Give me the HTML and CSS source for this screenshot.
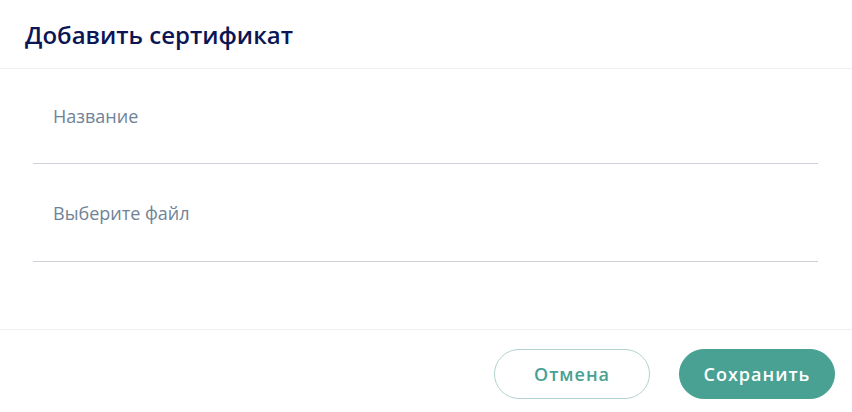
FILE: index.html
```html
<!DOCTYPE html>
<html lang="ru">
<head>
<meta charset="utf-8">
<link rel="stylesheet" href="styles.css">
</head>
<body>
<div class="modal">
  <header class="modal-header">
    <h1 class="modal-title">Добавить сертификат</h1>
  </header>
  <main class="modal-body">
    <div class="field field-name"><span class="field-label">Название</span></div>
    <div class="field field-file"><span class="field-label">Выберите файл</span></div>
  </main>
  <footer class="modal-footer">
    <button class="btn btn-outline">Отмена</button>
    <button class="btn btn-primary">Сохранить</button>
  </footer>
</div>
</body>
</html>
```
FILE: styles.css
```css
html, body {
  margin: 0;
  padding: 0;
  background: #ffffff;
}
body {
  font-family: "Open Sans", "Noto Sans", sans-serif;
  width: 852px;
  height: 412px;
  overflow: hidden;
}
.modal {
  display: flex;
  flex-direction: column;
}
.modal-header {
  height: 68px;
  border-bottom: 1px solid #eef0f3;
  padding: 0 25px;
  display: flex;
  align-items: center;
}
.modal-title {
  margin: 0;
  font-size: 24px;
  font-weight: 600;
  color: #0c1654;
  letter-spacing: 0;
}
.modal-body {
  height: 260px;
  padding: 0 34px 0 33px;
  display: flex;
  flex-direction: column;
}
.field {
  border-bottom: 1px solid #cdd2d8;
  padding: 0 20px;
  display: flex;
  align-items: center;
  flex-shrink: 0;
}
.field-name {
  height: 94px;
}
.field-file {
  height: 97px;
}
.field-label {
  font-size: 18px;
  color: #6f8397;
}
.modal-footer {
  border-top: 1px solid #eef0f3;
  padding: 19px 17px 0 0;
  display: flex;
  justify-content: flex-end;
  gap: 29px;
}
.btn {
  height: 50px;
  width: 156px;
  border-radius: 25px;
  font-family: "Open Sans", "Noto Sans", sans-serif;
  font-size: 18px;
  font-weight: 600;
  letter-spacing: 1px;
  cursor: pointer;
}
.btn-outline {
  background: #ffffff;
  border: 1px solid #b3d3d0;
  color: #48a192;
}
.btn-primary {
  background: #48a192;
  border: 1px solid #48a192;
  color: #ffffff;
}
```
